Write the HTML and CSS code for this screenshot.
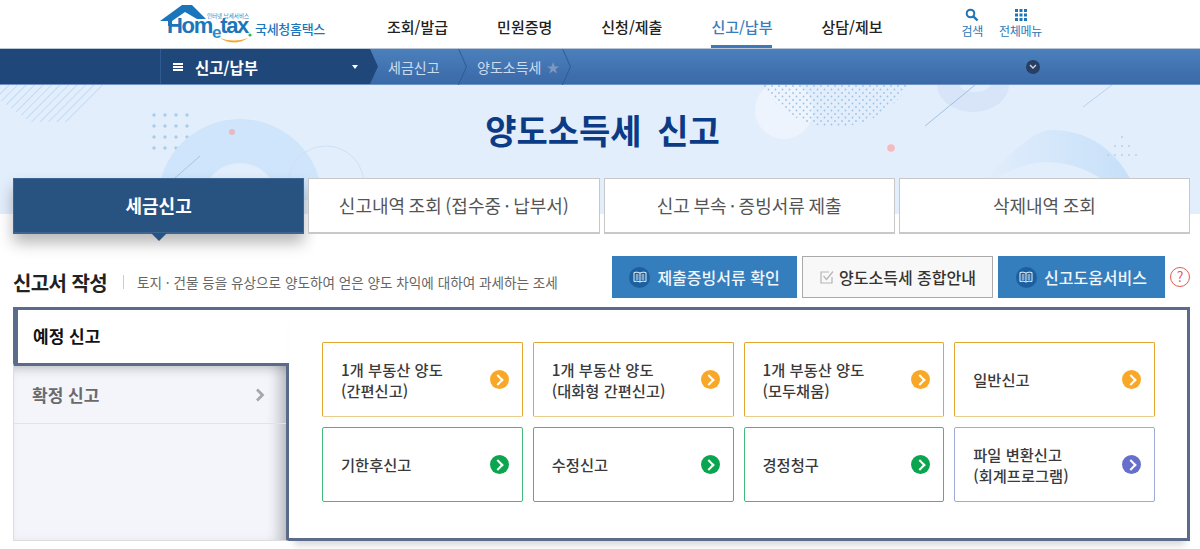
FILE: index.html
```html
<!DOCTYPE html>
<html lang="ko">
<head>
  <meta charset="UTF-8" />
  <meta name="viewport" content="width=device-width, initial-scale=1.0"/>
  <title>양도소득세 신고</title>
  <link rel="stylesheet" href="styles.css">
</head>
<body>

  <header class="top">
    <div class="logo">
      <svg class="logo-art" width="170" height="48" viewBox="0 0 170 48">
        <path d="M0 21 L22 5 H32 L46 19 H37 L25 12 L12 21 V26 H8 V21 Z" fill="#1b75bb"/>
        <path d="M60 38 Q74 47 88 38 Q74 43 60 38 Z" fill="#f2a93b"/>
        <circle cx="90" cy="35" r="1.6" fill="#39b54a"/>
      </svg>
      <span class="logo-small">인터넷 납세서비스</span>
      <span class="logo-word">Hom<i>e</i>tax</span>
      <span class="logo-name">국세청홈택스</span>
    </div>
    <nav class="gnb">
      <a>조회/발급</a>
      <a>민원증명</a>
      <a>신청/제출</a>
      <a class="on">신고/납부</a>
      <a>상담/제보</a>
    </nav>
    <div class="top-tools">
      <a class="tool tool-search">
        <svg width="14" height="14" viewBox="0 0 14 14"><circle cx="5.5" cy="5.5" r="3.8" fill="none" stroke="#1f74b6" stroke-width="2"/><path d="M8.5 8.5 L12.5 12.5" stroke="#1f74b6" stroke-width="2.4"/></svg>
        검색
      </a>
      <a class="tool tool-all">
        <svg width="14" height="14" viewBox="0 0 14 14" fill="#1f74b6"><rect x="1" y="1" width="3" height="3"/><rect x="5.5" y="1" width="3" height="3"/><rect x="10" y="1" width="3" height="3"/><rect x="1" y="5.5" width="3" height="3"/><rect x="5.5" y="5.5" width="3" height="3"/><rect x="10" y="5.5" width="3" height="3"/><rect x="1" y="10" width="3" height="3"/><rect x="5.5" y="10" width="3" height="3"/><rect x="10" y="10" width="3" height="3"/></svg>
        전체메뉴
      </a>
    </div>
  </header>

  <div class="crumbs">
    <div class="crumb-menu">
      <span class="burger"></span>
      <strong>신고/납부</strong>
      <span class="caret"></span>
    </div>
    <div class="crumb crumb-first">세금신고</div>
    <div class="crumb crumb-last">양도소득세 <span class="star">★</span></div>
    <span class="crumb-more">
      <svg width="8" height="6" viewBox="0 0 8 6"><path d="M1 1 L4 4 L7 1" fill="none" stroke="#cfd8e6" stroke-width="1.4"/></svg>
    </span>
  </div>

  <section class="hero">
    <svg class="hero-art" width="1200" height="129" viewBox="0 85 1200 129">
      <defs>
        <pattern id="hatch" width="6" height="6" patternUnits="userSpaceOnUse" patternTransform="rotate(-45)">
          <rect width="6" height="1" fill="#c3dcf3"/>
        </pattern>
        <pattern id="dots" width="7" height="7" patternUnits="userSpaceOnUse">
          <circle cx="2" cy="2" r="0.9" fill="#9cc3e6"/>
          <circle cx="5.5" cy="5.5" r="0.9" fill="#9cc3e6"/>
        </pattern>
        <pattern id="grid" width="11" height="11" patternUnits="userSpaceOnUse" x="152" y="113">
          <circle cx="2" cy="2" r="1.7" fill="#a9cde9"/>
        </pattern>
        <pattern id="grid-small" width="7" height="9" patternUnits="userSpaceOnUse">
          <circle cx="2" cy="2" r="1" fill="#b6d0ea"/>
        </pattern>
        <linearGradient id="fade" x1="0" x2="1" y1="0" y2="0">
          <stop offset="0" stop-color="#e3eefc"/>
          <stop offset="1" stop-color="#c6e0f9"/>
        </linearGradient>
      </defs>
      <path d="M0 85 H105 L68 122 H30 L0 100 Z" fill="url(#hatch)"/>
      <rect x="152" y="113" width="40" height="44" fill="url(#grid)"/>
      <path d="M158 200 A82 81 0 0 1 322 200 H277 A37 37 0 0 0 203 200 Z" fill="#cfe5fb"/>
      <circle cx="326" cy="184" r="38" fill="none" stroke="#cfe0f5"/>
      <path d="M175 178 L200 156" stroke="#a9c5e2"/>
      <circle cx="232" cy="132" r="3" fill="#e5b8c2"/>
      <circle cx="784" cy="110" r="29" fill="#edf4fe"/>
      <path d="M761 85 H910 Q880 127 835 127 Q790 127 761 85 Z" fill="url(#dots)"/>
      <path d="M937 85 A36 27 0 0 0 1009 85 H990 A15 7 0 0 1 960 85 Z" fill="#d8e4f8"/>
      <path d="M925 126 L975 85" stroke="#9cc1e6"/>
      <path d="M1083 107 L1112 85" stroke="#b6d2ef"/>
      <circle cx="891" cy="148" r="3.8" fill="#f7b9bb"/>
      <path d="M975 190 Q1030 130 1050 130 Q1105 130 1132 182 L1115 190 Q1085 162 1045 162 Q1020 162 975 190 Z" fill="url(#fade)"/>
      <path d="M1121 128 L1146 163 H1101 Z" fill="url(#grid-small)"/>
    </svg>
    <h1 class="hero-title">양도소득세 신고</h1>
    <div class="tabs">
      <a class="tab on">세금신고</a>
      <a class="tab">신고내역 조회 (접수중 · 납부서)</a>
      <a class="tab">신고 부속 · 증빙서류 제출</a>
      <a class="tab">삭제내역 조회</a>
    </div>
  </section>

  <div class="head">
    <h2>신고서 작성</h2>
    <p>토지 · 건물 등을 유상으로 양도하여 얻은 양도 차익에 대하여 과세하는 조세</p>
    <div class="head-btns">
      <a class="btn btn-blue btn-docs">
        <span class="book"><svg width="14" height="12" viewBox="0 0 14 12"><path d="M7 2 Q4 0.5 1 1.5 V10.5 Q4 9.5 7 11 Q10 9.5 13 10.5 V1.5 Q10 0.5 7 2 Z M7 2 V11 M2.8 4 H5.4 M2.8 6 H5.4 M2.8 8 H5.4 M8.6 4 H11.2 M8.6 6 H11.2 M8.6 8 H11.2" fill="none" stroke="#e8f1f9" stroke-width="1"/></svg></span>
        제출증빙서류 확인
      </a>
      <a class="btn btn-white">
        <svg width="15" height="15" viewBox="0 0 15 15"><path d="M10 2 H2 V13 H13 V7" fill="none" stroke="#b5b5b5" stroke-width="1.2"/><path d="M4.5 6 L7.5 9.5 L14 1.5" fill="none" stroke="#b5b5b5" stroke-width="1.2"/></svg>
        양도소득세 종합안내
      </a>
      <a class="btn btn-blue btn-help">
        <span class="book"><svg width="14" height="12" viewBox="0 0 14 12"><path d="M7 2 Q4 0.5 1 1.5 V10.5 Q4 9.5 7 11 Q10 9.5 13 10.5 V1.5 Q10 0.5 7 2 Z M7 2 V11 M2.8 4 H5.4 M2.8 6 H5.4 M2.8 8 H5.4 M8.6 4 H11.2 M8.6 6 H11.2 M8.6 8 H11.2" fill="none" stroke="#e8f1f9" stroke-width="1"/></svg></span>
        신고도움서비스
      </a>
      <span class="help">?</span>
    </div>
  </div>

  <div class="panel">
    <div class="side">
      <div class="side-on">예정 신고</div>
      <div class="side-rest">
        <div class="side-row">
          확정 신고
          <svg width="10" height="14" viewBox="0 0 10 14"><path d="M2 1.5 L7.5 7 L2 12.5" fill="none" stroke="#a3a7ae" stroke-width="2.8"/></svg>
        </div>
      </div>
    </div>
    <div class="cards">
      <a class="card orange"><span>1개 부동산 양도<br>(간편신고)</span><i class="go"></i></a>
      <a class="card orange"><span>1개 부동산 양도<br>(대화형 간편신고)</span><i class="go"></i></a>
      <a class="card orange"><span>1개 부동산 양도<br>(모두채움)</span><i class="go"></i></a>
      <a class="card orange"><span>일반신고</span><i class="go"></i></a>
      <a class="card green"><span>기한후신고</span><i class="go"></i></a>
      <a class="card green"><span>수정신고</span><i class="go"></i></a>
      <a class="card green"><span>경정청구</span><i class="go"></i></a>
      <a class="card violet"><span>파일 변환신고<br>(회계프로그램)</span><i class="go"></i></a>
    </div>
  </div>

</body>
</html>
```

FILE: styles.css
```css
* {
  box-sizing: border-box;
}

html, body {
  height: 549px;
  overflow: hidden;
}

body {
  margin: 0;
  padding: 0;
  font-family: "Noto Sans CJK KR", "Noto Sans", sans-serif;
  background: #ffffff;
  color: #333;
}

/* top header */
.top {
  height: 49px;
  display: flex;
  padding-left: 160px;
  border-bottom: 1px solid #b9c6d6;
}

.logo {
  position: relative;
  width: 227px;
}

.logo-art {
  position: absolute;
  left: 0;
  top: 0;
}

.logo-small {
  position: absolute;
  left: 47px;
  top: 13px;
  font-size: 5.5px;
  line-height: 6px;
  color: #2d7fc0;
  white-space: nowrap;
}

.logo-word {
  position: absolute;
  left: 7px;
  top: 18px;
  font-family: "Liberation Sans", sans-serif;
  font-size: 22px;
  line-height: 16px;
  font-weight: bold;
  letter-spacing: -1.3px;
  color: #1b75bb;
}

.logo-word i {
  font-style: normal;
  font-size: 17px;
  position: relative;
  top: 5px;
  color: #2d8ccb;
}

.logo-name {
  position: absolute;
  left: 95px;
  top: 19px;
  font-size: 13px;
  line-height: 20px;
  font-weight: 500;
  letter-spacing: -0.3px;
  color: #1b75bb;
  white-space: nowrap;
}

.gnb {
  display: flex;
  gap: 49px;
}

.gnb a {
  height: 48px;
  line-height: 54px;
  font-size: 15px;
  font-weight: 500;
  color: #222;
  white-space: nowrap;
}

.gnb a.on {
  color: #3b7cbb;
  border-bottom: 3px solid #3f78b8;
}

.top-tools {
  display: flex;
  margin-left: 79px;
  gap: 16px;
}

.tool {
  display: flex;
  flex-direction: column;
  align-items: center;
  gap: 1px;
  padding-top: 8px;
  font-size: 12px;
  line-height: 16px;
  letter-spacing: -0.3px;
  color: #2a77b5;
  white-space: nowrap;
}

/* breadcrumb bar */
.crumbs {
  height: 36px;
  display: flex;
  align-items: center;
  background: linear-gradient(#4b80bd, #3a69a6);
  color: #cbdcf0;
  font-size: 14px;
  border-bottom: 1px solid #6f93c2;
}

.crumb-menu {
  width: 378px;
  height: 100%;
  display: flex;
  align-items: center;
  padding-left: 173px;
  background: linear-gradient(#2f5a92, #2f5a92) 160px 0 / 1px 100% no-repeat, #20477a;
  color: #fff;
  clip-path: polygon(0 0, 370px 0, 378px 50%, 370px 100%, 0 100%);
  flex-shrink: 0;
}

.crumb-menu strong {
  margin-left: 12px;
  font-size: 15.5px;
  font-weight: 700;
}

.burger {
  width: 10px;
  height: 8px;
  border-top: 2px solid #fff;
  border-bottom: 2px solid #fff;
  background: linear-gradient(#fff, #fff) center / 100% 2px no-repeat;
}

.caret {
  margin-left: 94px;
  border-left: 3.5px solid transparent;
  border-right: 3.5px solid transparent;
  border-top: 4px solid #fff;
}

.crumb {
  position: relative;
  height: 100%;
  display: flex;
  align-items: center;
  white-space: nowrap;
}

/* chevron drawn from two skewed halves */
.crumb::before,
.crumb::after {
  content: "";
  position: absolute;
  right: 0;
  width: 9px;
  height: 50%;
  border-right: 1px solid #2f5b95;
}

.crumb::before {
  top: 0;
  transform: skewX(24deg);
}

.crumb::after {
  bottom: 0;
  transform: skewX(-24deg);
}

.crumb-first {
  width: 85px;
  padding-left: 10px;
}

.crumb-last {
  width: 104px;
  padding-left: 14px;
  gap: 5px;
}

.star {
  font-size: 13px;
  color: #7d99bf;
}

.crumb-more {
  width: 14px;
  height: 14px;
  margin-left: 459px;
  display: flex;
  align-items: center;
  justify-content: center;
  border-radius: 50%;
  background: #263f63;
}

/* hero with tabs */
.hero {
  position: relative;
  height: 149px;
  padding-top: 24px;
  background: linear-gradient(#e3eefc 129px, #fff 129px);
}

.hero-art {
  position: absolute;
  left: 0;
  top: 0;
}

.hero-title {
  position: relative;
  margin: 0;
  height: 69px;
  padding-left: 5px;
  line-height: 42px;
  text-align: center;
  font-size: 34px;
  font-weight: 700;
  word-spacing: 6px;
  color: #0b3b85;
}

.tabs {
  position: relative;
  display: grid;
  grid-template-columns: repeat(4, 1fr);
  gap: 4px;
  width: 1177px;
  margin-left: 13px;
}

.tab {
  position: relative;
  height: 56px;
  line-height: 52px;
  text-align: center;
  font-size: 18px;
  word-spacing: -1.5px;
  color: #555;
  background: #fff;
  border: 1px solid #c8c8c8;
  border-bottom-width: 2px;
  white-space: nowrap;
}

.tab.on {
  color: #fff;
  font-weight: 700;
  background: #285280;
  border-color: #3d6592;
  box-shadow: 0 9px 14px rgba(0, 0, 0, 0.28);
}

.tab.on::after {
  content: "";
  position: absolute;
  left: 137px;
  bottom: -9px;
  border-left: 8px solid transparent;
  border-right: 8px solid transparent;
  border-top: 8px solid #285280;
}

/* section heading */
.head {
  height: 42px;
  margin: 22px 10px 9px 13px;
  display: flex;
  align-items: center;
}

.head h2 {
  margin: 11px 0 0;
  font-size: 20px;
  font-weight: 700;
  letter-spacing: -0.6px;
  color: #222;
  white-space: nowrap;
}

.head p {
  margin: 10px 0 0 16px;
  padding-left: 13px;
  border-left: 1px solid #ccc;
  font-size: 13.6px;
  line-height: 14px;
  color: #666;
  white-space: nowrap;
}

.head-btns {
  margin-left: auto;
  display: flex;
  align-items: center;
  gap: 5px;
}

.btn {
  height: 42px;
  display: flex;
  align-items: center;
  justify-content: center;
  gap: 7px;
  font-size: 16px;
  font-weight: 500;
  white-space: nowrap;
}

.btn-blue {
  background: #357ebd;
  color: #f0f6fb;
}

.btn-docs {
  width: 185px;
}

.btn-help {
  width: 167px;
}

.btn-white {
  width: 191px;
  background: #f8f8f8;
  border: 1px solid #aaa;
  color: #333;
  gap: 5px;
}

.book {
  width: 21px;
  height: 21px;
  display: flex;
  align-items: center;
  justify-content: center;
  border-radius: 50%;
  background: #1d60a0;
}

.help {
  width: 20px;
  height: 20px;
  text-align: center;
  font-size: 14px;
  line-height: 17px;
  color: #e25a52;
  border: 1.5px solid #e25a52;
  border-radius: 50%;
}

/* report panel */
.panel {
  width: 1177px;
  height: 234px;
  margin-left: 13px;
  display: flex;
}

.side {
  width: 276px;
  display: flex;
  flex-direction: column;
  flex-shrink: 0;
}

.side-on {
  height: 56px;
  padding: 14px 0 0 15px;
  border-top: 3px solid #5a6b8b;
  border-left: 5px solid #5a6b8b;
  font-size: 17px;
  line-height: 24px;
  font-weight: 700;
  color: #111;
}

.side-rest {
  flex: 1;
  background: #f3f5fb;
  border-top: 3px solid #5a6b8b;
  border-right: 3px solid #5a6b8b;
  border-left: 1px solid #ddd;
  border-bottom: 1px solid #ddd;
  box-shadow: inset 0 10px 12px -8px rgba(0, 0, 0, 0.22), inset -14px 0 14px -8px rgba(0, 0, 0, 0.25);
}

.side-row {
  height: 58px;
  display: flex;
  align-items: center;
  justify-content: space-between;
  padding: 0 21px 0 18px;
  border-bottom: 1px solid #e2e3e8;
  font-size: 17px;
  font-weight: 700;
  color: #6a6a6a;
}

.cards {
  flex: 1;
  display: grid;
  grid-template-columns: repeat(4, 200.75px);
  grid-template-rows: repeat(2, 75px);
  gap: 10px 10px;
  padding: 32px 0 0 33px;
  background: #fff;
  border-top: 3px solid #5a6b8b;
  border-right: 3px solid #5a6b8b;
  border-bottom: 3px solid #5a6b8b;
  box-shadow: 0 9px 7px -5px rgba(0, 0, 0, 0.16);
}

.card {
  display: flex;
  align-items: center;
  justify-content: space-between;
  padding: 0 13px 0 18px;
  border: 1px solid #ccc;
  border-radius: 2px;
  font-size: 15.3px;
  line-height: 21px;
  font-weight: 500;
  color: #3a3a3a;
  white-space: nowrap;
}

.go {
  position: relative;
  width: 19px;
  height: 19px;
  border-radius: 50%;
  flex-shrink: 0;
}

.go::after {
  content: "";
  position: absolute;
  left: 4.5px;
  top: 6px;
  width: 6px;
  height: 6px;
  border-top: 2px solid #fff;
  border-right: 2px solid #fff;
  transform: rotate(45deg);
}

.orange {
  border-color: #e2a62d;
  border-bottom-color: #e9cd8c;
}

.orange .go {
  background: #f9a726;
}

.green {
  border-color: #43b97b;
}

.green .go {
  background: #0aa54e;
}

.violet {
  border-color: #9fabd4;
}

.violet .go {
  background: #6670cc;
}
```
